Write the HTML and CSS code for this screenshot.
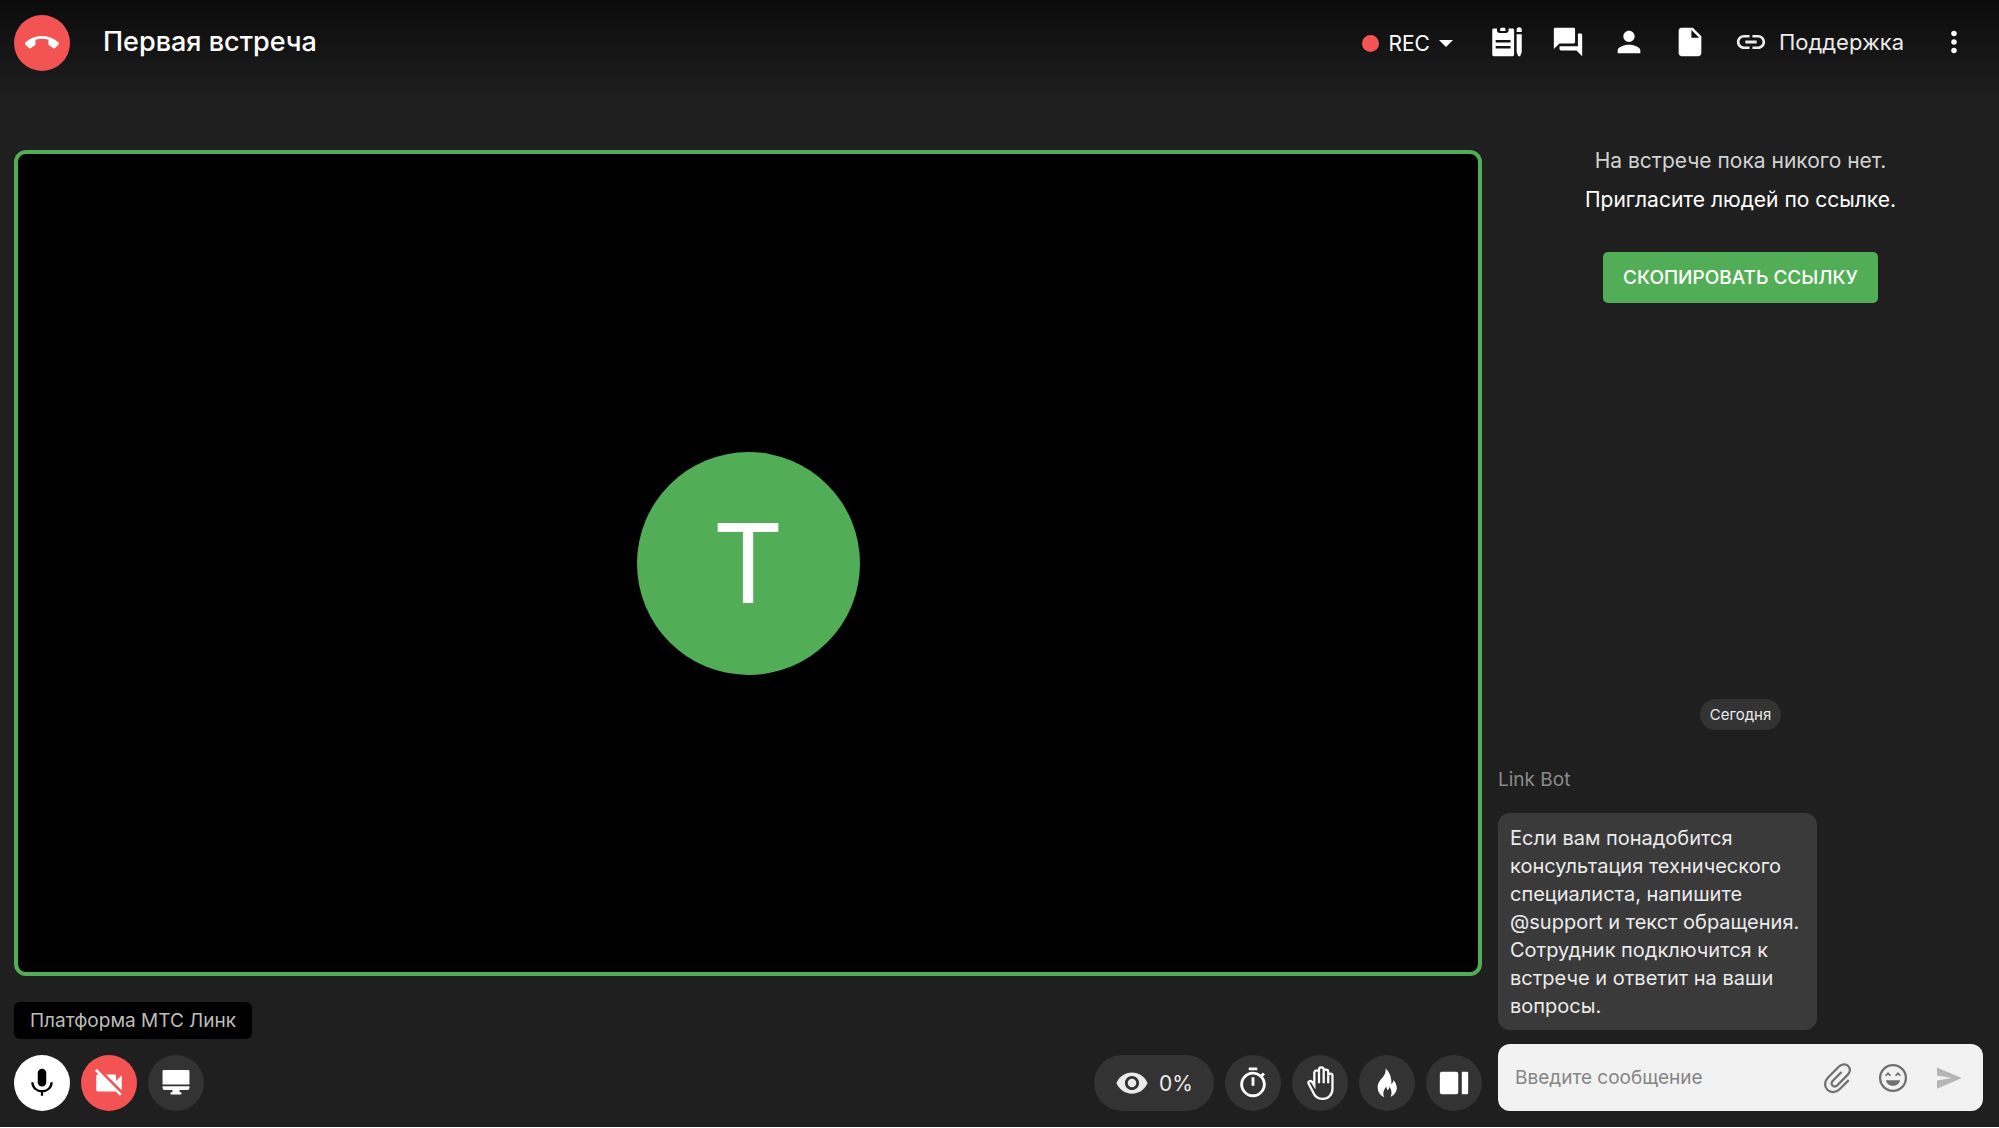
FILE: index.html
```html
<!DOCTYPE html>
<html lang="ru">
<head>
  <meta charset="UTF-8" />
  <meta name="viewport" content="width=device-width, initial-scale=1.0" />
  <title>Первая встреча</title>
  <link rel="stylesheet" href="styles.css">
</head>
<body>
  <header class="topbar">
    <button class="round danger" type="button" aria-label="Завершить">
      <svg class="icon" viewBox="0 0 24 24"><path d="M12 9c-1.6 0-3.15.25-4.6.72v3.1c0 .39-.23.74-.56.9-.98.49-1.87 1.12-2.66 1.85-.18.18-.43.28-.7.28-.28 0-.53-.11-.71-.29L.29 13.08a.96.96 0 0 1-.29-.7c0-.28.11-.53.29-.71C3.34 8.78 7.46 7 12 7s8.66 1.78 11.71 4.67c.18.18.29.43.29.71 0 .28-.11.53-.29.71l-2.48 2.48c-.18.18-.43.29-.71.29-.27 0-.52-.11-.7-.28a11.27 11.27 0 0 0-2.67-1.85.99.99 0 0 1-.56-.9v-3.1C15.15 9.25 13.6 9 12 9z"/></svg>
    </button>
    <h1>Первая встреча</h1>
    <nav class="tools">
      <button class="rec" type="button">
        <span class="rec-dot"></span>
        REC
        <svg class="caret" viewBox="0 0 14 7"><path d="M0 0h14L7 7z"/></svg>
      </button>
      <button type="button" aria-label="Заметки">
        <svg class="icon" viewBox="0 0 24 24"><path fill-rule="evenodd" d="M3 2.5h1.9v1.3c0 1 .8 1.8 1.8 1.8h4.6c1 0 1.800-.8 1.800-1.800V2.500h2.900a1 1 0 0 1 1 1V21a1 1 0 0 1-1 1H2.600a1 1 0 0 1-1-1V3.500a1 1 0 0 1 1-1zM4 10.500v1.800h10.500v-1.800zM4 14.800v1.800h10.500v-1.800z"/><path d="M7.200 4.200V3c0-.6.5-1 1-1h1.700c.6 0 1 .4 1 1v1.200zM18.800 5V3.400a1.800 1.800 0 0 1 3.600 0V5zM18.800 6.600h3.600V19l-1.100 3h-1.400l-1.100-3z"/></svg>
      </button>
      <button type="button" aria-label="Чат">
        <svg class="icon" viewBox="0 0 24 24"><path d="M21 6h-2v9H6v2c0 .55.45 1 1 1h11l4 4V7c0-.55-.45-1-1-1zm-4 6V3c0-.55-.45-1-1-1H3c-.55 0-1 .45-1 1v14l4-4h10c.55 0 1-.45 1-1z"/></svg>
      </button>
      <button type="button" aria-label="Участники">
        <svg class="icon" viewBox="0 0 24 24"><path d="M12 12c2.210 0 4-1.790 4-4s-1.790-4-4-4-4 1.790-4 4 1.790 4 4 4zm0 2c-2.670 0-8 1.340-8 4v2h16v-2c0-2.660-5.330-4-8-4z"/></svg>
      </button>
      <button type="button" aria-label="Файлы">
        <svg class="icon" viewBox="0 0 24 24"><path d="M6 2c-1.100 0-2 .9-2 2v16c0 1.100.9 2 2 2h12c1.100 0 2-.9 2-2V8l-6-6H6zm7 7V3.500L18.500 9H13z"/></svg>
      </button>
      <a class="support" href="#">
        <svg class="icon" viewBox="0 0 24 24"><path d="M3.900 12c0-1.710 1.390-3.100 3.100-3.100h4V7H7c-2.760 0-5 2.240-5 5s2.240 5 5 5h4v-1.900H7c-1.710 0-3.100-1.390-3.100-3.100zM8 13h8v-2H8v2zm9-6h-4v1.900h4c1.710 0 3.100 1.390 3.100 3.100s-1.390 3.100-3.100 3.100h-4V17h4c2.760 0 5-2.240 5-5s-2.240-5-5-5z"/></svg>
        Поддержка
      </a>
      <button type="button" aria-label="Ещё">
        <svg class="icon" viewBox="0 0 24 24"><path d="M12 8c1.100 0 2-.9 2-2s-.9-2-2-2-2 .9-2 2 .9 2 2 2zm0 2c-1.100 0-2 .9-2 2s.9 2 2 2 2-.9 2-2-.9-2-2-2zm0 6c-1.100 0-2 .9-2 2s.9 2 2 2 2-.9 2-2-.9-2-2-2z"/></svg>
      </button>
    </nav>
  </header>

  <div class="content">
    <main class="meeting">
      <section class="stage">
        <div class="avatar">T</div>
      </section>
      <div class="name-tag">Платформа МТС Линк</div>
      <div class="controls">
        <button class="round light" type="button" aria-label="Микрофон">
          <svg class="icon" viewBox="0 0 24 24"><path d="M12 14.500a3 3 0 0 0 3-3V5a3 3 0 0 0-6 0v6.500a3 3 0 0 0 3 3z"/><path class="line" d="M5.200 11.500c0 3.700 3 6.300 6.800 6.300s6.800-2.600 6.800-6.300M12 17.800V21"/></svg>
        </button>
        <button class="round danger" type="button" aria-label="Камера">
          <svg class="icon" viewBox="0 0 24 24"><path d="M21 6.500l-4 4V7c0-.55-.45-1-1-1H9.820L21 17.180V6.500zM3.270 2L2 3.270 4.730 6H4c-.55 0-1 .45-1 1v10c0 .55.45 1 1 1h12c.21 0 .39-.08.54-.18L19.730 21 21 19.730 3.270 2z"/></svg>
        </button>
        <button class="round" type="button" aria-label="Демонстрация экрана">
          <svg class="icon" viewBox="0 0 24 24"><path d="M3.500 2.800h17a1 1 0 0 1 1 1V13h-19V3.800a1 1 0 0 1 1-1zM2.500 14.300h19v1.200a1.400 1.400 0 0 1-1.400 1.400h-5.600v1.600h1.300v1.700H8.200v-1.700h1.300v-1.600H3.900a1.400 1.400 0 0 1-1.400-1.400z"/></svg>
        </button>
        <button class="attention" type="button">
          <svg class="icon" viewBox="0 0 24 24"><path d="M12 4.500C7 4.500 2.730 7.610 1 12c1.730 4.390 6 7.500 11 7.500s9.270-3.110 11-7.500c-1.730-4.390-6-7.500-11-7.500zM12 17c-2.760 0-5-2.240-5-5s2.240-5 5-5 5 2.240 5 5-2.240 5-5 5zm0-8c-1.660 0-3 1.340-3 3s1.340 3 3 3 3-1.340 3-3-1.340-3-3-3z"/></svg>
          0%
        </button>
        <button class="round" type="button" aria-label="Таймер">
          <svg class="icon" viewBox="0 0 24 24"><path d="M15 1H9v2h6V1zm-4 13h2V8h-2v6zm8.030-6.610l1.420-1.420c-.43-.51-.9-.99-1.410-1.410l-1.420 1.420A8.962 8.962 0 0 0 12 4a9 9 0 1 0 7.030 3.390zM12 20c-3.870 0-7-3.130-7-7s3.130-7 7-7 7 3.130 7 7-3.130 7-7 7z"/></svg>
        </button>
        <button class="round" type="button" aria-label="Поднять руку">
          <svg class="icon" viewBox="0 0 24 24"><path class="line" d="M8 13.800V4.400a1.700 1.700 0 0 1 3.300 0V2.700a1.650 1.650 0 0 1 3.300 0v1.500a1.600 1.600 0 0 1 3.200 0v2.600a1.500 1.500 0 0 1 3 0V16c0 4.200-2.900 7.200-6.900 7.200-3.400 0-5.700-1.800-6.900-5L4 12.500c-.7-1.700 1.300-2.600 2.400-1.200z"/><path class="line" d="M11.300 4.400v7.800M14.600 4.200v8M17.800 6.800v5.400"/></svg>
        </button>
        <button class="round" type="button" aria-label="Реакции">
          <svg class="icon" viewBox="0 0 24 24"><path d="M11 1.500c.4 3.300-1.100 5.400-3.100 7.700-1.800 2.100-2.900 4.200-2.400 7 .4 2.700 2 4.700 4.500 5.900-1.200-2.500-.6-5 1.500-7.600.2 1.400.5 2.100 1.100 2.700.6-.8 1-1.700 1.100-2.600 1.700 2.400 2 4.800.7 7.200 2.900-1.300 4.500-3.700 4.500-6.400 0-2.100-.9-3.900-2.400-5.500 0 1.200-.5 2.100-1.500 2.800.5-4.200-.9-8.100-4-11.200z"/></svg>
        </button>
        <button class="round" type="button" aria-label="Боковая панель">
          <svg class="icon" viewBox="0 0 24 24"><path d="M3.500 4h10A1.500 1.500 0 0 1 15 5.500v13a1.500 1.500 0 0 1-1.500 1.500h-10A1.500 1.500 0 0 1 2 18.500v-13A1.500 1.500 0 0 1 3.500 4zM17.500 4H21a1 1 0 0 1 1 1v14a1 1 0 0 1-1 1h-3.500z"/></svg>
        </button>
      </div>
    </main>

    <aside class="chat">
      <div class="invite">
        <p class="muted">На встрече пока никого нет.</p>
        <p>Пригласите людей по ссылке.</p>
        <button class="copy" type="button">СКОПИРОВАТЬ ССЫЛКУ</button>
      </div>
      <div class="messages">
        <span class="day">Сегодня</span>
        <div class="author">Link Bot</div>
        <p class="bubble">Если вам понадобится консультация технического специалиста, напишите @support и текст обращения. Сотрудник подключится к встрече и ответит на ваши вопросы.</p>
      </div>
      <form class="composer">
        <input type="text" placeholder="Введите сообщение" aria-label="Введите сообщение">
        <button type="button" aria-label="Прикрепить файл">
          <svg class="icon" viewBox="0 0 24 24"><path class="line" d="M20.300 13.500l-6.300 6.300c-2.700 2.700-6.400 2.800-8.800.5-2.300-2.300-2.200-6 .5-8.700l7.700-7.700c2-2 4.800-2.100 6.500-.4 1.700 1.700 1.600 4.300-.4 6.300l-7.100 7.100c-1.200 1.200-2.700 1.300-3.600.4-.9-.9-.8-2.300.4-3.500l6-6"/></svg>
        </button>
        <button type="button" aria-label="Смайлики">
          <svg class="icon" viewBox="0 0 24 24"><circle class="line" cx="12" cy="12" r="9.100"/><path d="M7 13.500h10c-.5 2.500-2.500 4-5 4s-4.500-1.500-5-4z"/><path class="thin" d="M6.800 10.400l1.700-1.700 1.700 1.700M13.800 10.400l1.700-1.700 1.700 1.700"/></svg>
        </button>
        <button class="send" type="submit" aria-label="Отправить">
          <svg class="icon" viewBox="0 0 24 24"><path d="M3.500 4.500L21 12 3.500 19.500v-5.800L14 12 3.500 10.300z"/></svg>
        </button>
      </form>
    </aside>
  </div>
</body>
</html>
```
FILE: styles.css
```css
* {
  box-sizing: border-box;
}
body {
  margin: 0;
  min-height: 100vh;
  display: flex;
  flex-direction: column;
  background: #1f1f1f linear-gradient(#0b0b0b, #1f1f1f) no-repeat 0 0 / 100% 100px;
  color: #ffffff;
  font-family: 'Inter', sans-serif;
  font-size: 19px;
  border-bottom: 1px solid #ffffff;
}
h1, p {
  margin: 0;
}
button, input {
  font: inherit;
  color: inherit;
  border: none;
  padding: 0;
  background: none;
}
button {
  display: flex;
  align-items: center;
  justify-content: center;
  cursor: pointer;
}
.icon {
  width: 34px;
  height: 34px;
  flex: none;
  fill: currentColor;
  overflow: visible;
}
.line, .thin {
  fill: none;
  stroke: currentColor;
  stroke-width: 1.6;
}
.thin {
  stroke-width: 1.2;
}

/* header */
.topbar {
  display: flex;
  align-items: center;
  height: 86px;
  padding: 0 28px 0 14px;
}
h1 {
  margin: 0 0 4px 33px;
  font-size: 27px;
  font-weight: 500;
}
.tools {
  display: flex;
  align-items: center;
  gap: 27px;
  margin: 0 0 2px auto;
  font-size: 22px;
}
.rec {
  gap: 9px;
  margin: 2px 10px 0 0;
  font-size: 21px;
}
.rec-dot {
  width: 17px;
  height: 17px;
  border-radius: 50%;
  background: #f35453;
}
.caret {
  width: 14px;
  height: 7px;
  fill: currentColor;
}
.support {
  display: flex;
  align-items: center;
  gap: 11px;
  margin-right: 6px;
  color: #ebebeb;
  text-decoration: none;
}

/* buttons */
.round {
  width: 56px;
  height: 56px;
  border-radius: 50%;
  background: #333333;
}
.danger {
  background: #f35453;
}
.light {
  background: #ffffff;
  color: #000000;
}

.content {
  flex: 1;
  display: grid;
  grid-template-columns: minmax(0, 1fr) 485px;
  gap: 16px;
  padding: 0 16px 16px 14px;
}
.meeting {
  display: flex;
  flex-direction: column;
  padding-top: 64px;
}
.stage {
  flex: 1;
  display: flex;
  align-items: center;
  justify-content: center;
  border: 4px solid #52ae56;
  border-radius: 12px;
  background: #000000;
}
.avatar {
  width: 223px;
  height: 223px;
  border-radius: 50%;
  background: #52ae56;
  font-size: 110px;
  line-height: 223px;
  text-align: center;
}
.name-tag {
  align-self: flex-start;
  margin: 26px 0 16px;
  padding: 0 16px;
  border-radius: 6px;
  background: #000000;
  color: #bdbdbd;
  line-height: 37px;
}
.controls {
  display: flex;
  gap: 11px;
}
.attention {
  gap: 10px;
  width: 120px;
  height: 56px;
  margin-left: auto;
  border-radius: 28px;
  background: #333333;
  color: #ebebeb;
  font-size: 21px;
}

/* chat */
.chat {
  display: flex;
  flex-direction: column;
  padding-top: 55px;
}
.invite {
  display: flex;
  flex-direction: column;
  align-items: center;
  font-size: 21px;
  line-height: 39px;
}
.muted {
  color: #d2d2d2;
}
.copy {
  height: 51px;
  margin-top: 33px;
  padding: 0 20px;
  border-radius: 5px;
  background: #52ae56;
  font-size: 19px;
  font-weight: 500;
}
.messages {
  display: flex;
  flex-direction: column;
  align-items: flex-start;
  margin-top: auto;
}
.day {
  align-self: center;
  padding: 0 10px;
  border-radius: 16px;
  background: #333333;
  color: #ebebeb;
  font-size: 15px;
  line-height: 31px;
}
.author {
  margin: 36px 0 19px;
  color: #8b8b8b;
  line-height: 28px;
}
.bubble {
  width: 319px;
  padding: 11px 12px 10px;
  border-radius: 12px;
  background: #3a3a3a;
  color: #ebebeb;
  font-size: 20px;
  line-height: 28px;
}
.composer {
  display: flex;
  align-items: center;
  gap: 22px;
  height: 67px;
  margin-top: 14px;
  padding: 0 17px;
  border-radius: 12px;
  background: #f2f2f2;
  color: #707070;
}
.composer input {
  flex: 1;
  min-width: 0;
  outline: none;
}
.composer input::placeholder {
  color: #858585;
}
.send {
  color: #b5b5b5;
}
```
